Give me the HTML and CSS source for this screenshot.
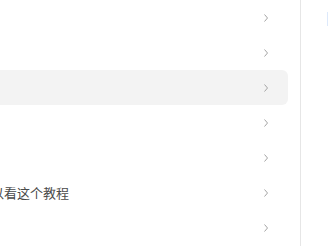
FILE: index.html
```html
<!DOCTYPE html>
<html lang="zh">
<head>
<meta charset="utf-8">
<link rel="stylesheet" href="styles.css">
</head>
<body>
<div class="layout">
  <div class="main">
    <ul class="menu">
      <li class="item"><span class="label"></span><svg class="chev" width="4" height="8" viewBox="0 0 4 8"><path d="M0.5 0.5 L3.5 4 L0.5 7.5"/></svg></li>
      <li class="item"><span class="label"></span><svg class="chev" width="4" height="8" viewBox="0 0 4 8"><path d="M0.5 0.5 L3.5 4 L0.5 7.5"/></svg></li>
      <li class="item active"><span class="label"></span><svg class="chev" width="4" height="8" viewBox="0 0 4 8"><path d="M0.5 0.5 L3.5 4 L0.5 7.5"/></svg></li>
      <li class="item"><span class="label"></span><svg class="chev" width="4" height="8" viewBox="0 0 4 8"><path d="M0.5 0.5 L3.5 4 L0.5 7.5"/></svg></li>
      <li class="item"><span class="label"></span><svg class="chev" width="4" height="8" viewBox="0 0 4 8"><path d="M0.5 0.5 L3.5 4 L0.5 7.5"/></svg></li>
      <li class="item"><span class="label">可以看这个教程</span><svg class="chev" width="4" height="8" viewBox="0 0 4 8"><path d="M0.5 0.5 L3.5 4 L0.5 7.5"/></svg></li>
      <li class="item"><span class="label"></span><svg class="chev" width="4" height="8" viewBox="0 0 4 8"><path d="M0.5 0.5 L3.5 4 L0.5 7.5"/></svg></li>
    </ul>
  </div>
  <div class="side">
    <div class="field"></div>
  </div>
</div>
</body>
</html>
```
FILE: styles.css
```css
html, body {
  margin: 0;
  padding: 0;
  background: #ffffff;
  overflow: hidden;
}
body {
  font-family: "Noto Sans CJK SC", "Noto Sans", sans-serif;
  font-size: 13px;
  color: #4a4a4a;
}
.layout {
  display: flex;
  height: 246px;
}
.main {
  width: 300px;
  flex: none;
  border-right: 1px solid #e6e6e6;
  overflow: hidden;
}
.menu {
  list-style: none;
  margin: 0 12px 0 -40px;
  padding: 0;
}
.item {
  display: flex;
  align-items: center;
  justify-content: space-between;
  height: 35px;
  padding: 0 20px 0 18px;
  border-radius: 6px;
  box-sizing: border-box;
}
.item.active {
  background: #f3f3f3;
}
.label {
  white-space: nowrap;
  line-height: 16px;
}
.chev {
  display: block;
  flex: none;
  margin-top: 1px;
}
.chev path {
  fill: none;
  stroke: #a3a3a3;
  stroke-width: 1;
}
.side {
  flex: 1;
  padding: 12px 0 0 26px;
}
.field {
  width: 40px;
  height: 14px;
  border-left: 1px solid #dde9fb;
}
```
